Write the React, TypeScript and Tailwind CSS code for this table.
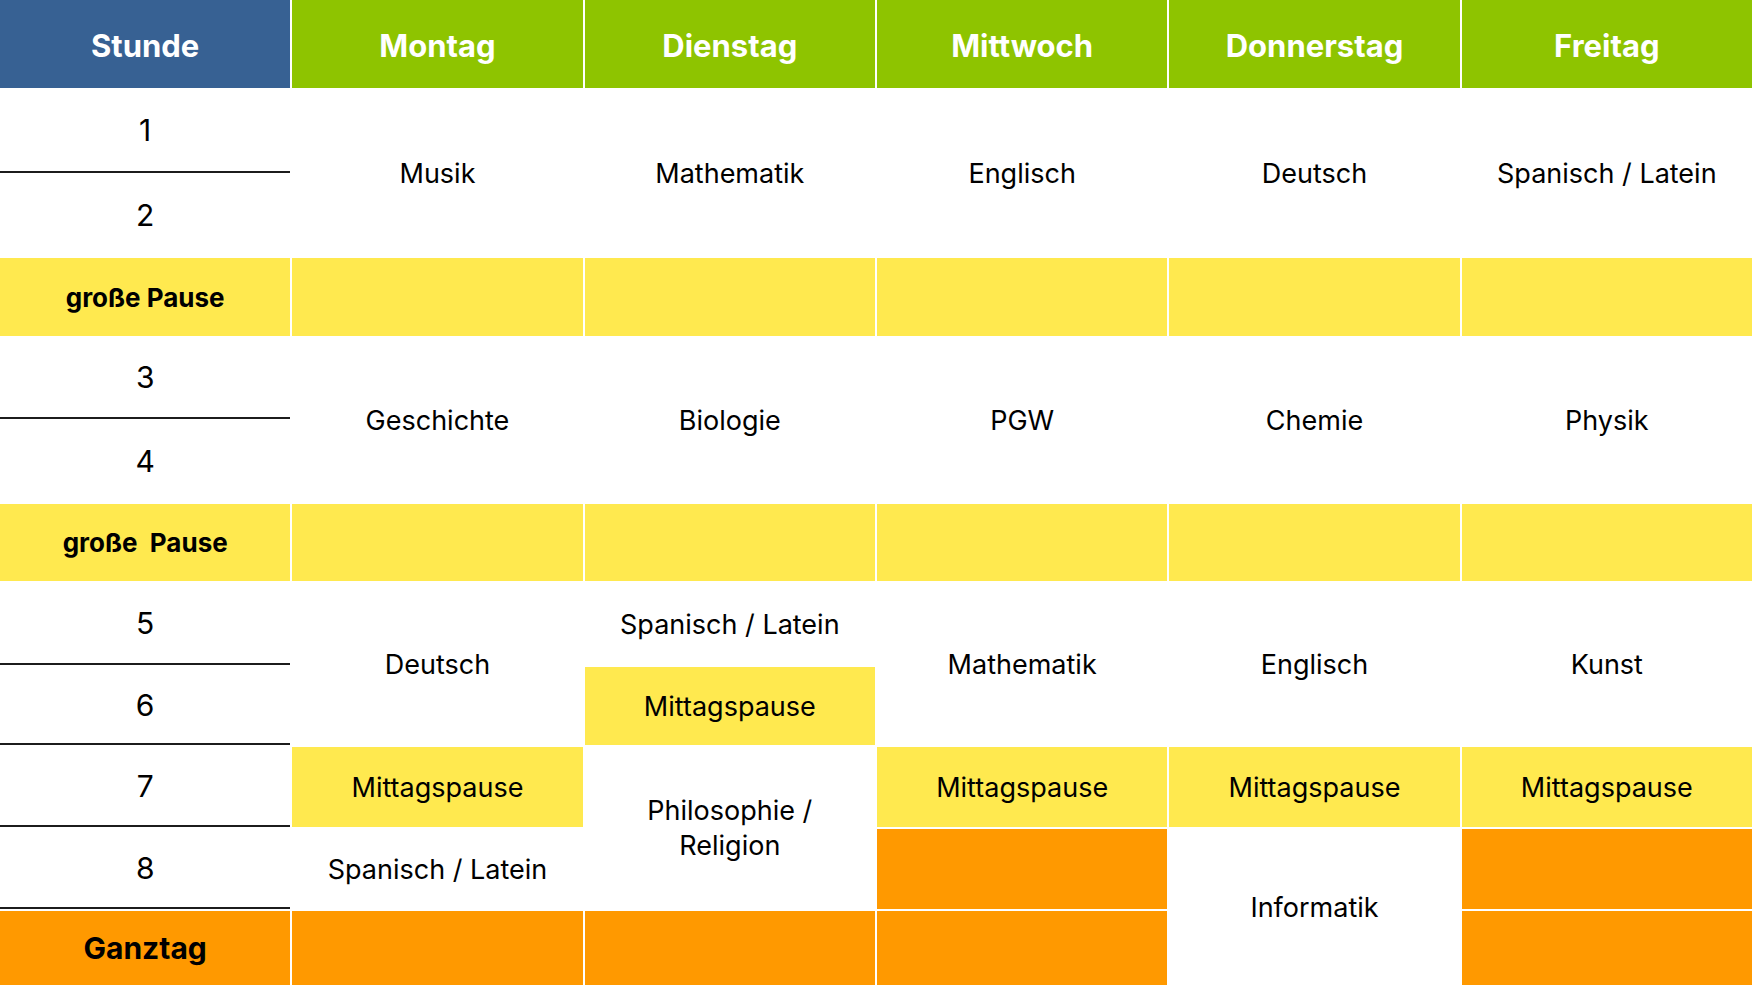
const days = ['Montag', 'Dienstag', 'Mittwoch', 'Donnerstag', 'Freitag'];

const yellow = 'bg-[#ffe94f]';
const orange = 'bg-[#ff9900]';

// each cell: grid placement + colour + text
const cells = [
  // Montag
  { pos: 'col-start-2 row-start-2 row-span-2', bg: 'bg-white', text: 'Musik' },
  { pos: 'col-start-2 row-start-4', bg: yellow, text: '' },
  { pos: 'col-start-2 row-start-5 row-span-2', bg: 'bg-white', text: 'Geschichte' },
  { pos: 'col-start-2 row-start-7', bg: yellow, text: '' },
  { pos: 'col-start-2 row-start-8 row-span-2', bg: 'bg-white', text: 'Deutsch' },
  { pos: 'col-start-2 row-start-10', bg: yellow, text: 'Mittagspause' },
  { pos: 'col-start-2 row-start-11', bg: 'bg-white', text: 'Spanisch / Latein' },
  { pos: 'col-start-2 row-start-12', bg: orange, text: '' },
  // Dienstag
  { pos: 'col-start-3 row-start-2 row-span-2', bg: 'bg-white', text: 'Mathematik' },
  { pos: 'col-start-3 row-start-4', bg: yellow, text: '' },
  { pos: 'col-start-3 row-start-5 row-span-2', bg: 'bg-white', text: 'Biologie' },
  { pos: 'col-start-3 row-start-7', bg: yellow, text: '' },
  { pos: 'col-start-3 row-start-8', bg: 'bg-white', text: 'Spanisch / Latein' },
  { pos: 'col-start-3 row-start-9', bg: yellow, text: 'Mittagspause' },
  { pos: 'col-start-3 row-start-10 row-span-2', bg: 'bg-white', text: 'Philosophie /\nReligion' },
  { pos: 'col-start-3 row-start-12', bg: orange, text: '' },
  // Mittwoch
  { pos: 'col-start-4 row-start-2 row-span-2', bg: 'bg-white', text: 'Englisch' },
  { pos: 'col-start-4 row-start-4', bg: yellow, text: '' },
  { pos: 'col-start-4 row-start-5 row-span-2', bg: 'bg-white', text: 'PGW' },
  { pos: 'col-start-4 row-start-7', bg: yellow, text: '' },
  { pos: 'col-start-4 row-start-8 row-span-2', bg: 'bg-white', text: 'Mathematik' },
  { pos: 'col-start-4 row-start-10', bg: yellow, text: 'Mittagspause' },
  { pos: 'col-start-4 row-start-11', bg: orange, text: '' },
  { pos: 'col-start-4 row-start-12', bg: orange, text: '' },
  // Donnerstag
  { pos: 'col-start-5 row-start-2 row-span-2', bg: 'bg-white', text: 'Deutsch' },
  { pos: 'col-start-5 row-start-4', bg: yellow, text: '' },
  { pos: 'col-start-5 row-start-5 row-span-2', bg: 'bg-white', text: 'Chemie' },
  { pos: 'col-start-5 row-start-7', bg: yellow, text: '' },
  { pos: 'col-start-5 row-start-8 row-span-2', bg: 'bg-white', text: 'Englisch' },
  { pos: 'col-start-5 row-start-10', bg: yellow, text: 'Mittagspause' },
  { pos: 'col-start-5 row-start-11 row-span-2', bg: 'bg-white', text: 'Informatik' },
  // Freitag
  { pos: 'col-start-6 row-start-2 row-span-2', bg: 'bg-white', text: 'Spanisch / Latein' },
  { pos: 'col-start-6 row-start-4', bg: yellow, text: '' },
  { pos: 'col-start-6 row-start-5 row-span-2', bg: 'bg-white', text: 'Physik' },
  { pos: 'col-start-6 row-start-7', bg: yellow, text: '' },
  { pos: 'col-start-6 row-start-8 row-span-2', bg: 'bg-white', text: 'Kunst' },
  { pos: 'col-start-6 row-start-10', bg: yellow, text: 'Mittagspause' },
  { pos: 'col-start-6 row-start-11', bg: orange, text: '' },
  { pos: 'col-start-6 row-start-12', bg: orange, text: '' },
];

// first column, one entry per row after the header
const hours = [
  { label: '1', bg: 'bg-white', cls: 'text-[30px] border-b-2 border-[#1c1c1c]' },
  { label: '2', bg: 'bg-white', cls: 'text-[30px]' },
  { label: 'große Pause', bg: yellow, cls: 'text-[26px] font-bold' },
  { label: '3', bg: 'bg-white', cls: 'text-[30px] border-b-2 border-[#1c1c1c]' },
  { label: '4', bg: 'bg-white', cls: 'text-[30px]' },
  { label: 'große\u00a0 Pause', bg: yellow, cls: 'text-[26px] font-bold' },
  { label: '5', bg: 'bg-white', cls: 'text-[30px] border-b-2 border-[#1c1c1c]' },
  { label: '6', bg: 'bg-white', cls: 'text-[30px] border-b-2 border-[#1c1c1c]' },
  { label: '7', bg: 'bg-white', cls: 'text-[30px] border-b-2 border-[#1c1c1c]' },
  { label: '8', bg: 'bg-white', cls: 'text-[30px] border-b-2 border-[#1c1c1c]' },
  { label: 'Ganztag', bg: orange, cls: 'text-[30px] font-bold' },
];

const App = () => {
  return (
    <div className="w-[1752px] h-[985px] bg-white overflow-hidden font-['Inter','Liberation_Sans',sans-serif] text-black">
      <div className="grid grid-cols-6 gap-[2px] h-full grid-rows-[88px_83px_81px_78px_81px_81px_77px_82px_78px_80px_80px_74px]">
        <div className="col-start-1 row-start-1 bg-[#376193] flex items-center justify-center pt-[4px] text-white text-[31px] font-bold">
          Stunde
        </div>
        {days.map((day) => (
          <div
            key={day}
            className="row-start-1 bg-[#8ec400] flex items-center justify-center pt-[4px] text-white text-[31px] font-bold"
          >
            {day}
          </div>
        ))}

        {hours.map((h, i) => (
          <div
            key={i}
            className={`col-start-1 flex items-center justify-center ${h.bg} ${h.cls}`}
            style={{ gridRowStart: i + 2 }}
          >
            {h.label}
          </div>
        ))}

        {cells.map((c, i) => (
          <div
            key={i}
            className={`${c.pos} ${c.bg} flex items-center justify-center text-center text-[27px] leading-[35px] whitespace-pre-line`}
          >
            {c.text}
          </div>
        ))}
      </div>
    </div>
  );
};

export default App;
